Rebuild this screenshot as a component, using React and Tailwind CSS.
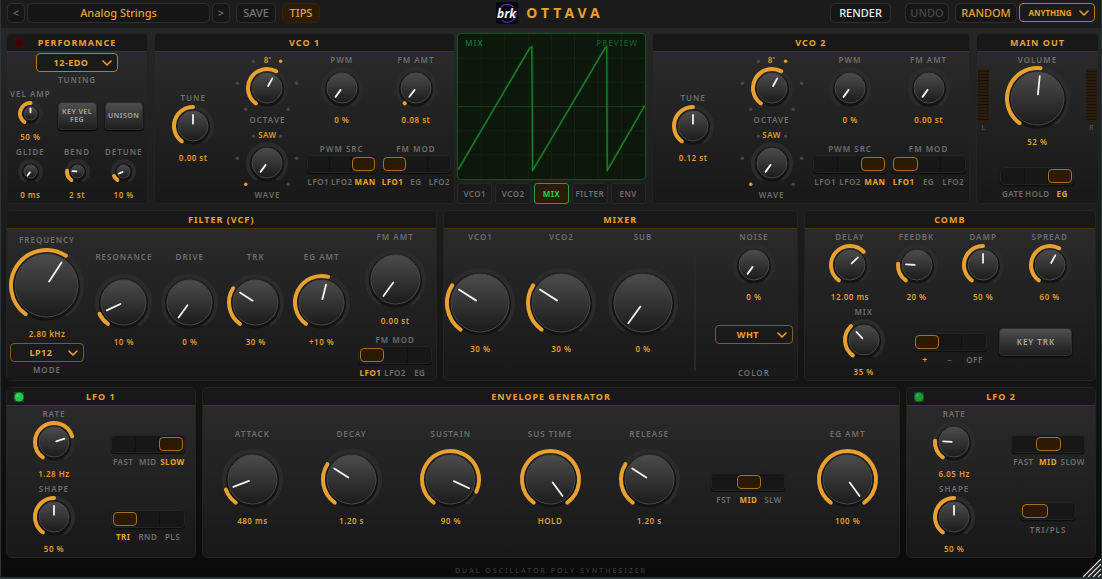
import { useId, useState } from "react";
import { clsx } from "clsx";

const SWEEP = 144;
const STEPS = [-135, -81, -27, 27, 81, 135];

function polar(c, r, deg) {
  const a = (deg * Math.PI) / 180;
  return [c + r * Math.sin(a), c - r * Math.cos(a)];
}

function arc(c, r, from, to) {
  const [x1, y1] = polar(c, r, from);
  const [x2, y2] = polar(c, r, to);
  return `M${x1} ${y1}A${r} ${r} 0 ${to - from > 180 ? 1 : 0} 1 ${x2} ${y2}`;
}

const caption = "block whitespace-nowrap text-center text-[8px] leading-3 font-semibold tracking-[1px] text-[#6e6e6e]";
const readout = "block whitespace-nowrap text-center text-[8px] leading-3 font-semibold tracking-[0.5px] text-[#e39b2d]";

function Dial({ id, name, size, f, onChange, steps }) {
  const c = size / 2;
  const body = c - 5.5;
  const angle = -SWEEP + f * SWEEP * 2;
  const [x1, y1] = polar(c, body * 0.15, angle);
  const [x2, y2] = polar(c, Math.max(body - 4.5, 5), angle);
  const grad = `${id}g`;
  return (
    <div className="relative" style={{ width: size, height: size }}>
      <svg width={size} height={size} viewBox={`0 0 ${size} ${size}`} className="block overflow-visible" aria-hidden="true">
        <defs>
          <linearGradient id={grad} x1="0" y1="0" x2="0" y2="1">
            <stop offset="0" stopColor="#4c4c4c" />
            <stop offset="1" stopColor="#1b1b1b" />
          </linearGradient>
        </defs>
        <path d={arc(c, c - 2, -SWEEP, SWEEP)} fill="none" stroke="#2b2b2b" strokeWidth="4" strokeLinecap="round" />
        <circle cx={c} cy={c + 1.5} r={body + 1.5} fill="#101010" opacity="0.8" />
        <circle cx={c} cy={c} r={body - 0.5} fill={`url(#${grad})`} stroke="#484848" strokeWidth="1" />
        {f > 0 && (
          <path d={arc(c, c - 2, -SWEEP, angle)} fill="none" stroke="#e8a030" strokeWidth="4" strokeLinecap="round" />
        )}
        <line x1={x1} y1={y1} x2={x2} y2={y2} stroke="#f2f2f2" strokeWidth="1.8" strokeLinecap="round" />
        {steps &&
          STEPS.map((s, i) => {
            const [x, y] = polar(c, 30, s);
            return <circle key={s} cx={x} cy={y} r="1.7" fill={i === Math.round(f * 5) ? "#e8a030" : "#474747"} />;
          })}
      </svg>
      <input
        id={id}
        type="range"
        min="0"
        max="1"
        step="0.001"
        value={f}
        aria-label={name}
        onChange={(e) => onChange(Number(e.target.value))}
        className="absolute inset-0 h-full w-full cursor-pointer opacity-0"
      />
    </div>
  );
}

function Knob({ label, f: initial, text, size = 42, gap = "pt-px", className }) {
  const id = useId();
  const [f, setF] = useState(initial);
  return (
    <div className={clsx("flex flex-col items-center", className)}>
      <label htmlFor={id} className={caption}>{label}</label>
      <div className={gap}>
        <Dial id={id} name={label} size={size} f={f} onChange={setF} />
      </div>
      <output htmlFor={id} className={clsx(readout, "mt-[5px]")}>{text ?? `${Math.round(f * 100)} %`}</output>
    </div>
  );
}

function StepKnob({ label, f: initial, text }) {
  const id = useId();
  const [f, setF] = useState(initial);
  return (
    <div className="flex flex-col items-center">
      <output htmlFor={id} className={clsx(readout, "font-bold")}>{text}</output>
      <div className="pt-px">
        <Dial id={id} name={label} size={42} f={f} onChange={setF} steps />
      </div>
      <label htmlFor={id} className={clsx(caption, "mt-[5px]")}>{label}</label>
    </div>
  );
}

function Switch({ title, name, options, value, className = "w-[74px]" }) {
  const id = useId();
  const [current, setCurrent] = useState(value);
  return (
    <div role="radiogroup" aria-label={title ?? name} className={clsx("flex flex-col", className)}>
      {title && <span className={caption}>{title}</span>}
      <div className="flex rounded-[4px] border border-[#232323] bg-[#171717] p-px shadow-[0_1px_1px_#0c0c0c]">
        {options.map((o) => (
          <input
            key={o}
            id={`${id}${o}`}
            type="radio"
            name={id}
            checked={current === o}
            onChange={() => setCurrent(o)}
            className="m-0 h-[14px] min-w-0 flex-1 cursor-pointer appearance-none border-r border-[#101010] last:border-r-0 checked:rounded-[4px] checked:border checked:border-[#a87120] checked:bg-[#2c1b02] checked:last:border-r"
          />
        ))}
      </div>
      <div className="mt-[3px] flex">
        {options.map((o) => (
          <span key={o} className="flex min-w-0 flex-1 justify-center">
            <label
              htmlFor={`${id}${o}`}
              className={clsx(
                "whitespace-nowrap text-[8px] leading-3 tracking-[0.5px]",
                current === o ? "font-bold text-[#e8a030]" : "font-semibold text-[#6e6e6e]"
              )}
            >
              {o}
            </label>
          </span>
        ))}
      </div>
    </div>
  );
}

function TwoWay({ label }) {
  const id = useId();
  const [on, setOn] = useState(false);
  return (
    <div className="flex flex-col items-center">
      <div className="flex h-[18px] w-14 rounded-[4px] border border-[#232323] bg-[#171717] p-px shadow-[0_1px_1px_#0c0c0c]">
        <input
          id={id}
          type="checkbox"
          checked={on}
          onChange={() => setOn(!on)}
          className="m-0 h-[14px] w-[26px] cursor-pointer appearance-none rounded-[4px] border border-[#a87120] bg-[#2c1b02] checked:ml-auto"
        />
      </div>
      <label htmlFor={id} className={clsx(caption, "mt-1")}>{label}</label>
    </div>
  );
}

function Picker({ name, value, options, className, bright, compact }) {
  return (
    <div className={clsx("relative", className)}>
      <select
        aria-label={name}
        defaultValue={value}
        className={clsx(
          "block h-[19px] w-full cursor-pointer appearance-none rounded-[4px] border bg-[#1a1a1a] leading-3 font-bold text-[#e8a030] [text-align-last:center]",
          compact ? "pr-[18px] pl-1 text-[8px]" : "pr-[22px] pl-2.5 text-[9px] tracking-[0.5px]",
          bright ? "border-[#b97c22]" : "border-[#835a1c]"
        )}
      >
        {options.map((o) => <option key={o}>{o}</option>)}
      </select>
      <svg viewBox="0 0 10 6" className="pointer-events-none absolute top-[7px] right-[6px] h-[6px] w-[10px]" aria-hidden="true">
        <path d="M1 1L5 5L9 1" fill="none" stroke="#e8a030" strokeWidth="1.6" strokeLinecap="round" strokeLinejoin="round" />
      </svg>
    </div>
  );
}

function PushButton({ children, className }) {
  return (
    <button
      type="button"
      className={clsx(
        "flex h-7 items-center justify-center rounded-[4px] border border-[#2e2e2e] bg-linear-to-b from-[#505050] via-[#353535] to-[#1e1e1e] text-center leading-2 font-semibold text-[#a8a8a8] shadow-[0_1px_2px_#000]",
        className
      )}
    >
      {children}
    </button>
  );
}

function Panel({ title, led, className, children }) {
  return (
    <section className={clsx("flex min-w-0 flex-col overflow-hidden rounded-[5px] border border-[#232323]", className)}>
      <header className="relative flex h-[18px] items-center justify-center border-b border-[#4a340f] bg-[#181818]">
        {led && (
          <svg width="10" height="10" viewBox="0 0 10 10" className="absolute left-[7px]" aria-hidden="true">
            <rect width="10" height="10" fill={led.rim} />
            <circle cx="5" cy="5" r="4.5" fill={led.lamp} />
            <circle cx="3.5" cy="3.5" r="1" fill="#ffffff" opacity={led.shine} />
          </svg>
        )}
        <h2 className="text-[9px] leading-3 font-bold tracking-[1px] text-[#e8a030]">{title}</h2>
      </header>
      <div className="min-h-[151px] flex-1 bg-linear-to-b from-[#2a2a2a] to-[#181818]">{children}</div>
    </section>
  );
}

function Vco({ title, className, tune, fm }) {
  return (
    <Panel title={title} className={className}>
      <div className="grid grid-cols-4 items-center justify-items-center gap-y-[3px] px-px pt-0.5">
        <Knob label="TUNE" f={0.5} text={tune} className="row-span-2" />
        <StepKnob label="OCTAVE" f={0.6} text="8'" />
        <Knob label="PWM" f={0} />
        <Knob label="FM AMT" f={fm > 0 ? 0.003 : 0} text={`${fm.toFixed(2)} st`} />
        <StepKnob label="WAVE" f={0} text="SAW" />
        <Switch title="PWM SRC" options={["LFO1", "LFO2", "MAN"]} value="MAN" className="w-full px-0.5" />
        <Switch title="FM MOD" options={["LFO1", "EG", "LFO2"]} value="LFO1" className="w-full px-0.5" />
      </div>
    </Panel>
  );
}

function Scope({ className }) {
  const [view, setView] = useState("MIX");
  return (
    <section className={clsx("flex min-w-0 flex-col", className)}>
      <div className="relative flex-1 rounded-[4px] border border-[#1d4a20] bg-[#0c180c] shadow-[0_0_2px_#164a1a]">
        <svg viewBox="0 0 186 144" preserveAspectRatio="none" className="absolute inset-0 h-full w-full" aria-hidden="true">
          <path d="M23 0V144M46.500 0V144M70 0V144M93 0V144M116 0V144M139.500 0V144M163 0V144M0 24H186M0 48H186M0 96H186M0 120H186" stroke="#11240f" strokeWidth="1" fill="none" />
          <path d="M0 72H186" stroke="#17401a" strokeWidth="1" />
          <path d="M0 135L72 13L74 12L74.500 135.500L147 13L148.500 12V135.500L186 71" fill="none" stroke="#12501c" strokeWidth="2.500" strokeLinejoin="bevel" opacity="0.6" />
          <path d="M0 135L72 13M73.500 12L74.300 135.500L147 13M148 12L148.700 135.500L186 71" fill="none" stroke="#21802f" strokeWidth="1.200" />
        </svg>
        <div className="relative flex justify-between px-[7px] pt-[3px] text-[8px] leading-3 font-semibold tracking-[1px]">
          <span className="text-[#1f7434]">MIX</span>
          <span className="text-[#1b5226]">PREVIEW</span>
        </div>
      </div>
      <div className="mt-[3px] grid grid-cols-5 gap-[3px]">
        {["VCO1", "VCO2", "MIX", "FILTER", "ENV"].map((v) => (
          <button
            key={v}
            type="button"
            aria-pressed={view === v}
            onClick={() => setView(v)}
            className={clsx(
              "h-[21px] rounded-[3px] border text-[8px] leading-3 tracking-[0.5px]",
              view === v
                ? "border-[#2a9a45] bg-[#2b1c05] font-bold text-[#28c94a]"
                : "border-[#272727] bg-[#1a1a1a] font-semibold text-[#6e6e6e]"
            )}
          >
            {v}
          </button>
        ))}
      </div>
    </section>
  );
}

function Meter({ side }) {
  return (
    <div className="flex w-[11px] shrink-0 flex-col items-center pt-[15px]">
      <div className="h-[53px] w-full bg-[repeating-linear-gradient(to_bottom,#2a1d0b_0px,#2a1d0b_2px,#17130e_2px,#17130e_3px)]" />
      <span className="text-[7px] leading-3 text-[#5c5c5c]">{side}</span>
    </div>
  );
}

const topButton = "h-5 rounded-[5px] border border-[#2e2e2e] bg-[#161616] text-[11px] leading-4 font-medium";

function TopBar() {
  return (
    <header className="grid h-7 grid-cols-[1fr_auto_1fr] items-center bg-[#1b1b1b] px-1.5 pb-0.5">
      <div className="flex">
        <button type="button" aria-label="Previous preset" className={clsx(topButton, "w-[18px] text-[#777777]")}>&lt;</button>
        <button type="button" className={clsx(topButton, "ml-0.5 w-[183px] text-[#e8a030]")}>Analog Strings</button>
        <button type="button" aria-label="Next preset" className={clsx(topButton, "ml-0.5 w-[18px] text-[#777777]")}>&gt;</button>
        <button type="button" className={clsx(topButton, "ml-1.5 w-10 text-[#777777]")}>SAVE</button>
        <button type="button" aria-pressed="true" className="ml-1.5 h-5 w-[38px] rounded-[5px] border border-[#33230c] bg-[#2b1c08] text-[11px] leading-4 font-medium text-[#e8a030]">TIPS</button>
      </div>
      <div className="flex items-center gap-2 pr-0.5">
        <svg width="22" height="22" viewBox="0 0 22 22" role="img" aria-label="brk">
          <rect width="22" height="22" rx="3" fill="#06060a" />
          <path d="M4 6.500A8.500 8.500 0 0 1 17.500 5M19.500 9A8.500 8.500 0 0 1 6 18.200" fill="none" stroke="#5a2fa0" strokeWidth="1.300" />
          <text x="10.500" y="15.500" textAnchor="middle" fontFamily="Open Sans, sans-serif" fontSize="12" fontStyle="italic" fontWeight="700" fill="#f2f0f5">brk</text>
        </svg>
        <h1 className="text-[14px] leading-5 font-bold tracking-[4px] text-[#e8a030]">OTTAVA</h1>
      </div>
      <div className="flex justify-end">
        <button type="button" className={clsx(topButton, "w-[61px] text-[#f0f0f0]")}>RENDER</button>
        <button type="button" disabled className={clsx(topButton, "ml-3.5 w-11 text-[#474747]")}>UNDO</button>
        <button type="button" className={clsx(topButton, "ml-1.5 w-[62px] text-[#e8a030]")}>RANDOM</button>
        <Picker name="Randomize target" value="ANYTHING" options={["ANYTHING", "FILTER", "VCO"]} className="ml-0.5 w-[76px]" bright compact />
      </div>
    </header>
  );
}

function Lfo({ title, led, className, children }) {
  return (
    <Panel title={title} led={led} className={className}>
      <div className="grid grid-cols-2 items-center justify-items-center gap-y-[3px] pt-0.5">{children}</div>
    </Panel>
  );
}

export default function App() {
  return (
    <main className="relative flex min-h-screen flex-col border-x border-b-2 border-[#2a353b] bg-linear-to-b from-[#282828] to-[#0a0a0a] font-['Noto_Sans','Open_Sans',sans-serif]">
      <TopBar />
      <div className="flex flex-col gap-1.5 px-[5px] pt-[5px]">
        <div className="-mr-[3px] flex">
          <Panel title="PERFORMANCE" led={{ rim: "#241717", lamp: "#430408", shine: 0 }} className="flex-[141_1_0%]">
            <Picker name="Tuning" value="12-EDO" options={["12-EDO", "19-EDO", "24-EDO"]} className="mx-auto mt-px w-[82px]" bright />
            <span className={clsx(caption, "mt-0.5")}>TUNING</span>
            <div className="grid grid-cols-3 items-center justify-items-center gap-y-[3px] pt-0.5">
              <Knob label="VEL AMP" f={0.5} size={25} />
              <PushButton className="w-[39px] text-[7px] tracking-[0.5px]">KEY VEL<br />FEG</PushButton>
              <PushButton className="w-[38px] text-[7px] tracking-[0.5px]">UNISON</PushButton>
              <Knob label="GLIDE" f={0} size={25} text="0 ms" />
              <Knob label="BEND" f={0.2} size={25} text="2 st" />
              <Knob label="DETUNE" f={0.1} size={25} />
            </div>
          </Panel>
          <Vco title="VCO 1" className="ml-1.5 flex-[301_1_0%]" tune="0.00 st" fm={0.08} />
          <Scope className="ml-0.5 flex-[190_1_0%]" />
          <Vco title="VCO 2" className="ml-1.5 flex-[318_1_0%]" tune="0.12 st" fm={0} />
          <Panel title="MAIN OUT" className="ml-1.5 flex-[122_1_0%]">
            <div className="flex justify-between px-px pt-0.5">
              <Meter side="L" />
              <Knob label="VOLUME" f={0.52} size={65} gap="pt-0" />
              <Meter side="R" />
            </div>
            <div className="flex justify-center pt-[19px]">
              <Switch name="Amp mode" options={["GATE", "HOLD", "EG"]} value="EG" />
            </div>
          </Panel>
        </div>

        <div className="flex gap-1.5">
          <Panel title="FILTER (VCF)" className="flex-[431_1_0%]">
            <div className="grid grid-cols-[84fr_66fr_66fr_66fr_66fr_81fr] justify-items-center">
              <div className="flex flex-col items-center pt-[5px] pr-1">
                <Knob label="FREQUENCY" f={0.615} text="2.80 kHz" size={75} gap="pt-0.5" />
                <Picker name="Mode" value="LP12" options={["LP12", "LP24", "HP12", "BP12"]} className="mt-[3px] w-[74px]" />
                <span className={clsx(caption, "mt-0.5")}>MODE</span>
              </div>
              <Knob label="RESONANCE" f={0.1} size={57} gap="pt-[11px]" className="pt-[22px]" />
              <Knob label="DRIVE" f={0} size={57} gap="pt-[11px]" className="pt-[22px]" />
              <Knob label="TRK" f={0.3} size={57} gap="pt-[11px]" className="pt-[22px]" />
              <Knob label="EG AMT" f={0.55} text="+10 %" size={57} gap="pt-[11px]" className="pt-[22px]" />
              <div className="flex flex-col items-center pt-0.5">
                <Knob label="FM AMT" f={0} text="0.00 st" size={61} gap="pt-1.5" />
                <div className="pt-[7px]">
                  <Switch title="FM MOD" options={["LFO1", "LFO2", "EG"]} value="LFO1" />
                </div>
              </div>
            </div>
          </Panel>
          <Panel title="MIXER" className="flex-[355_1_0%]">
            <div className="grid grid-cols-[72fr_91fr_73fr_32fr_86fr] justify-items-center pt-0.5 pl-px">
              <Knob label="VCO1" f={0.3} size={70} gap="pt-[25px]" />
              <Knob label="VCO2" f={0.3} size={70} gap="pt-[25px]" />
              <Knob label="SUB" f={0} size={70} gap="pt-[25px]" />
              <div className="my-2 w-0.5 rounded bg-[#282828]" />
              <div className="flex w-full flex-col items-center">
                <Knob label="NOISE" f={0} />
                <Picker name="Noise color" value="WHT" options={["WHT", "PNK", "BRN"]} className="mt-[22px] w-[78px]" />
                <span className={clsx(caption, "mt-[23px]")}>COLOR</span>
              </div>
            </div>
          </Panel>
          <Panel title="COMB" className="flex-[292_1_0%]">
            <div className="grid grid-cols-4 justify-items-center px-3 pt-0.5">
              <Knob label="DELAY" f={0.66} text="12.00 ms" />
              <Knob label="FEEDBK" f={0.2} />
              <Knob label="DAMP" f={0.5} />
              <Knob label="SPREAD" f={0.6} />
            </div>
            <div className="grid grid-cols-3 items-center justify-items-center px-4 pt-[3px]">
              <Knob label="MIX" f={0.35} />
              <div className="pt-3.5">
                <Switch name="Comb polarity" options={["+", "−", "OFF"]} value="+" />
              </div>
              <PushButton className="w-[73px] text-[8px] tracking-[1px]">KEY TRK</PushButton>
            </div>
          </Panel>
        </div>

        <div className="flex gap-1.5">
          <Lfo title="LFO 1" led={{ rim: "#174a24", lamp: "#1fc544", shine: 0.4 }} className="flex-[189_1_0%]">
            <Knob label="RATE" f={0.752} text="1.28 Hz" />
            <div className="pt-3.5">
              <Switch name="LFO 1 range" options={["FAST", "MID", "SLOW"]} value="SLOW" />
            </div>
            <Knob label="SHAPE" f={0.5} />
            <div className="pt-3.5">
              <Switch name="LFO 1 wave" options={["TRI", "RND", "PLS"]} value="TRI" />
            </div>
          </Lfo>
          <Panel title="ENVELOPE GENERATOR" className="flex-[701_1_0%]">
            <div className="grid grid-cols-7 items-center justify-items-center pt-[22px] pr-0.5">
              <Knob label="ATTACK" f={0.115} text="480 ms" size={61} gap="pt-[9px]" />
              <Knob label="DECAY" f={0.3} text="1.20 s" size={61} gap="pt-[9px]" />
              <Knob label="SUSTAIN" f={0.9} size={61} gap="pt-[9px]" />
              <Knob label="SUS TIME" f={1} text="HOLD" size={61} gap="pt-[9px]" />
              <Knob label="RELEASE" f={0.3} text="1.20 s" size={61} gap="pt-[9px]" />
              <div className="pt-6">
                <Switch name="Envelope speed" options={["FST", "MID", "SLW"]} value="MID" />
              </div>
              <Knob label="EG AMT" f={1} size={61} gap="pt-[9px]" />
            </div>
          </Panel>
          <Lfo title="LFO 2" led={{ rim: "#15401f", lamp: "#169a36", shine: 0.4 }} className="flex-[189_1_0%]">
            <Knob label="RATE" f={0.2} text="6.05 Hz" />
            <div className="pt-3.5">
              <Switch name="LFO 2 range" options={["FAST", "MID", "SLOW"]} value="MID" />
            </div>
            <Knob label="SHAPE" f={0.5} />
            <TwoWay label="TRI/PLS" />
          </Lfo>
        </div>
      </div>
      <footer className="flex flex-1 items-center justify-center pt-1.5 text-[7px] leading-3 font-medium tracking-[2px] text-[#3a3a3a]">
        DUAL OSCILLATOR POLY SYNTHESIZER
      </footer>
      <svg width="18" height="18" viewBox="0 0 18 18" className="absolute right-0 bottom-0" aria-hidden="true">
        <path d="M0 18L18 0M5 18L18 5M10 18L18 10M15 18L18 15" stroke="#d8d8d8" strokeWidth="1.300" />
        <path d="M1.500 18L18 1.500M6.500 18L18 6.500M11.500 18L18 11.500" stroke="#555555" strokeWidth="1" />
      </svg>
    </main>
  );
}
